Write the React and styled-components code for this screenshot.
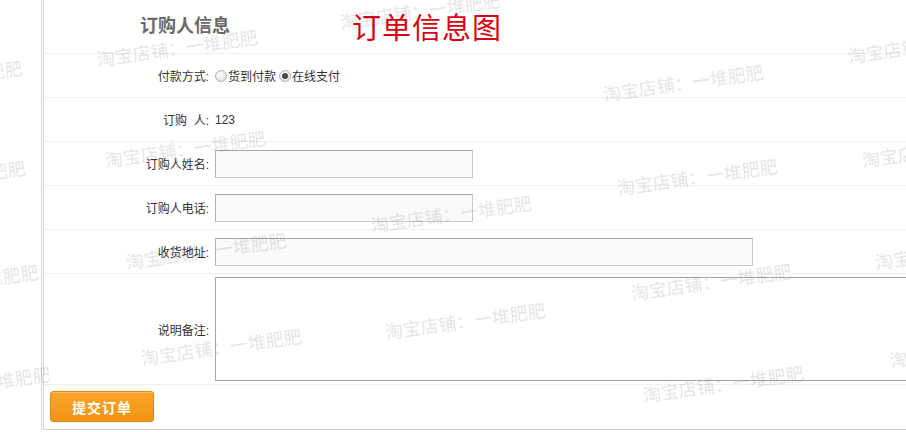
import React from 'react';
import styled, { createGlobalStyle } from 'styled-components';

const GlobalStyle = createGlobalStyle`
  html, body {
    margin: 0;
    padding: 0;
    background: #fff;
    overflow: hidden;
  }
  body {
    font-family: "Liberation Sans", "Noto Sans CJK SC", sans-serif;
    font-size: 12px;
    color: #333;
  }
`;

const Page = styled.div`
  position: relative;
  width: 906px;
  height: 432px;
  padding-left: 41px;
  box-sizing: border-box;
  overflow: hidden;
`;

const Panel = styled.div`
  width: 1100px;
  border-left: 3px double #d6d6d6;
  border-bottom: 1px solid #cfcfcf;
`;

const TitleRow = styled.div`
  display: flex;
  align-items: center;
  height: 54px;
  padding-bottom: 6px;
  box-sizing: border-box;
  border-bottom: 1px solid #efefef;
`;

const SectionTitle = styled.h3`
  margin: 0 0 0 96px;
  width: 212px;
  font-family: "Noto Sans CJK SC", sans-serif;
  font-size: 18px;
  font-weight: bold;
  color: #6a6a6a;
`;

const BigTitle = styled.h1`
  margin: 4px 0 0;
  font-family: "Noto Sans CJK SC", sans-serif;
  font-size: 29px;
  font-weight: 400;
  color: #d9000f;
  letter-spacing: 1px;
`;

const Row = styled.div`
  display: flex;
  align-items: center;
  height: ${p => p.$h || 44}px;
  padding: ${p => p.$pad || '0'};
  box-sizing: border-box;
  border-bottom: 1px solid #efefef;
`;

const Label = styled.div`
  width: 165px;
  flex-shrink: 0;
  text-align: right;
  white-space: pre;
  color: #333;
  font-size: 12px;
`;

const Value = styled.div`
  display: flex;
  align-items: center;
  margin-left: 6px;
  color: #333;
  font-size: 12px;
`;

const RadioWrap = styled.label`
  display: flex;
  align-items: center;
  margin-right: 3px;
  font-family: "Noto Sans CJK SC", sans-serif;
  font-size: 12px;
  color: #333;
`;

const Radio = styled.input.attrs({ type: 'radio' })`
  appearance: none;
  margin: 0 1px 0 0;
  width: 12px;
  height: 12px;
  border-radius: 50%;
  border: 1px solid #b5b5b5;
  background: radial-gradient(circle at 40% 35%, #ffffff 0%, #e4e4e4 70%, #cfcfcf 100%);
  box-sizing: border-box;
  position: relative;

  &:checked::after {
    content: '';
    position: absolute;
    left: 2px;
    top: 2px;
    width: 6px;
    height: 6px;
    border-radius: 50%;
    background: #4a4a4a;
  }
`;

const TextInput = styled.input`
  width: ${p => p.$w}px;
  height: 28px;
  box-sizing: border-box;
  border: 1px solid #c9c9c9;
  border-top-color: #a8a8a8;
  border-left-color: #b0b0b0;
  background: #fafafa;
  padding: 0 4px;
  outline: none;
`;

const TextArea = styled.textarea`
  display: block;
  width: 720px;
  height: 104px;
  box-sizing: border-box;
  border: 1px solid #a6a6a6;
  background: #fff;
  resize: none;
  outline: none;
`;

const ButtonRow = styled.div`
  display: flex;
  align-items: flex-start;
  height: 44px;
  padding: 6px 0 0 6px;
  box-sizing: border-box;
`;

const SubmitButton = styled.button`
  width: 104px;
  height: 31px;
  border: 1px solid #e08a12;
  border-radius: 3px;
  background: linear-gradient(#f9a52a, #f29312);
  color: #fff;
  font-family: "Noto Sans CJK SC", sans-serif;
  font-size: 14px;
  font-weight: bold;
  letter-spacing: 1px;
  box-shadow: inset 0 1px 0 rgba(255, 255, 255, 0.25);
  cursor: pointer;
`;

const Watermarks = styled.div`
  position: absolute;
  inset: 0;
  pointer-events: none;
  overflow: hidden;
  z-index: 5;
`;

const Mark = styled.span`
  position: absolute;
  left: ${p => p.$x}px;
  top: ${p => p.$y}px;
  transform: translate(-50%, -50%) rotate(-8deg);
  white-space: nowrap;
  font-family: "Noto Sans CJK SC", sans-serif;
  font-size: 18px;
  font-weight: 500;
  color: rgba(0, 0, 0, 0.1);
`;

const marks = [
  [177, 47], [420, 10], [683, 82], [928, 44],
  [185, 148], [451, 213], [697, 176], [942, 148],
  [206, 250], [465, 320], [711, 281], [955, 250],
  [221, 346], [723, 383], [970, 348],
  [-58, 78], [-55, 178], [-42, 282], [-30, 384],
];

function App() {
  return (
    <>
      <GlobalStyle />
      <Page>
        <Panel>
          <TitleRow>
            <SectionTitle>订购人信息</SectionTitle>
            <BigTitle>订单信息图</BigTitle>
          </TitleRow>

          <Row>
            <Label>付款方式:</Label>
            <Value>
              <RadioWrap>
                <Radio name="pay" />货到付款
              </RadioWrap>
              <RadioWrap>
                <Radio name="pay" defaultChecked />在线支付
              </RadioWrap>
            </Value>
          </Row>

          <Row>
            <Label>订购  人:</Label>
            <Value>123</Value>
          </Row>

          <Row>
            <Label>订购人姓名:</Label>
            <Value>
              <TextInput $w={258} />
            </Value>
          </Row>

          <Row>
            <Label>订购人电话:</Label>
            <Value>
              <TextInput $w={258} />
            </Value>
          </Row>

          <Row>
            <Label>收货地址:</Label>
            <Value>
              <TextInput $w={538} />
            </Value>
          </Row>

          <Row $h={111} $pad="3px 0">
            <Label>说明备注:</Label>
            <Value>
              <TextArea />
            </Value>
          </Row>

          <ButtonRow>
            <SubmitButton>提交订单</SubmitButton>
          </ButtonRow>
        </Panel>

        <Watermarks>
          {marks.map(([x, y], i) => (
            <Mark key={i} $x={x} $y={y}>淘宝店铺：一堆肥肥</Mark>
          ))}
        </Watermarks>
      </Page>
    </>
  );
}

export default App;
